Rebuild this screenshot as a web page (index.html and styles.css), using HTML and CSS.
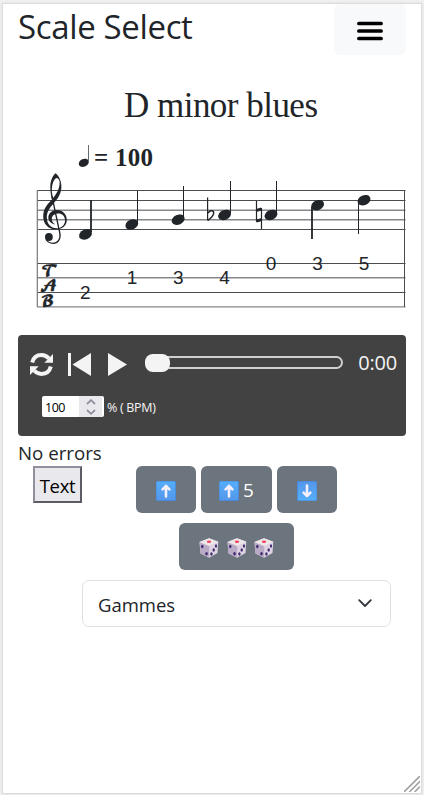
FILE: index.html
```html
<!DOCTYPE html>
<html lang="en">
<head>
<meta charset="utf-8">
<title>Scale Select</title>
<link rel="stylesheet" href="styles.css">
</head>
<body>
<svg width="0" height="0" class="defs">
  <defs>
    <linearGradient id="sky" x1="0" y1="0" x2="0" y2="1"><stop offset="0" stop-color="#55aefb"/><stop offset="1" stop-color="#5497ea"/></linearGradient>
    <symbol id="arrow" viewBox="0 0 20 20"><rect width="20" height="20" rx="1.5" fill="#4585d6"/><rect x=".5" y=".5" width="18.7" height="18.7" rx="1.3" fill="url(#sky)"/><path d="M10 4.9 6.6 8.4M10 4.9l3.4 3.5M10 5v10.4" fill="none" stroke="#f6effc" stroke-width="2.6" stroke-linecap="round" stroke-linejoin="round"/></symbol>
    <symbol id="die" viewBox="0 0 20 20"><path d="M10 .3 19.3 3.8 18.5 15 10.2 19.8 1.5 15.5.5 4z" fill="#ddd3e2"/><path d="M.5 4 10.2 8v11.8L1.5 15.5z" fill="#b9abc5"/><path d="M10 .3 19.3 3.8 10.2 8 .5 4z" fill="#eee7e8"/><ellipse cx="10" cy="3.7" rx="2.2" ry="1.2" fill="#ef4765"/><g fill="#432b70"><ellipse cx="3.3" cy="8.5" rx="1.2" ry="1.7"/><ellipse cx="7.5" cy="15.7" rx="1.3" ry="1.8"/><ellipse cx="17" cy="8" rx="1.1" ry="1.8"/><ellipse cx="14.7" cy="12" rx="1.2" ry="1.7"/><ellipse cx="12.4" cy="16" rx="1.2" ry="1.7"/></g></symbol>
    <ellipse id="head" rx="6.7" ry="4.9" transform="rotate(-24)"/>
  </defs>
</svg>
<div class="frame">
  <header class="top">
    <h1>Scale Select</h1>
    <button class="menu" aria-label="Menu">
      <svg width="26" height="20" viewBox="0 0 26 20"><path d="M1.9 2.5h22.2M1.9 10h22.2M1.9 17.5h22.2" stroke="#000" stroke-width="3.7" stroke-linecap="round"/></svg>
    </button>
  </header>

  <svg class="score" viewBox="18 75 388 260" width="388" height="260" fill="#212529">
    <text class="title" x="124" y="117.3" textLength="194">D minor blues</text>
    <g transform="translate(83.8 162.8) scale(.78)"><use href="#head"/></g>
    <path d="M88.5 145v17" stroke="#666a6d"/>
    <text class="tempo" x="94" y="166" textLength="59">= 100</text>
    <g fill="none" stroke="#4a4d50">
      <path d="M37 190.5H405.5M37 200.5H405.5M37 229.5H405.5M37 263.5H405.5M37 292.5H405.5"/>
      <path d="M37 210.3H405.5M37 219.7H405.5M37 277.8H405.5M37 306.9H405.5" stroke="#85878a" stroke-width="1.4"/>
      <path d="M37.3 190V307" stroke="#77797c" stroke-width="1.2"/>
      <path d="M404.5 190V307"/>
    </g>
    <path fill-rule="evenodd" d="M55.3 173.2C58.5 175 61.6 181 61.4 187 61.2 194 57.5 199 53.5 203.5 49.5 208 46.8 212 46.8 217.5 46.8 224 51 228.3 56.5 228.3 61.5 228.3 65 225 65 220.5 65 216 62 213.6 58.3 213.6 54.5 213.6 51.8 216 51.8 219 51.8 221.5 53 223 54.8 224L54.4 224.6C50.5 223.2 48.3 220.5 48.3 217.5 48.3 213.5 52 210 57 210 63 210 66.8 214.5 66.8 220 66.8 226 62 229.4 55.5 229.4 48 229.4 43.2 223.5 43.2 216.5 43.2 208.5 47.5 204 52 199.5 50.8 195 50.3 191 50.3 187 50.3 181 52.5 176 55.3 173.2ZM56.7 178C59 178.5 60 181 59.6 184 59 190 56 194.5 53 198 51.8 193 51.5 190 52.2 186 52.8 182 54.5 178.5 56.7 178Z"/>
    <path d="M51.9 196 59.8 233C61 239 58 243.3 53 243.3 50 243.3 47.5 241.8 46 239.5" fill="none" stroke="#212529" stroke-width="1.3"/>
    <circle cx="48.9" cy="237" r="3.9"/>
    <g class="tab"><text x="41" y="276">𝓣</text><text x="39.5" y="290.5">𝓐</text><text x="40.5" y="305.6">𝓑</text></g>
    <use href="#head" transform="translate(85.5 234.4)"/>
    <use href="#head" transform="translate(131.8 224.6)"/>
    <use href="#head" transform="translate(178.2 219.7)"/>
    <use href="#head" transform="translate(224.6 214.9)"/>
    <use href="#head" transform="translate(271 214.9)"/>
    <use href="#head" transform="translate(317.6 205.2)"/>
    <use href="#head" transform="translate(364 200.2)"/>
    <g stroke="#212529" fill="none">
      <path d="M91 200V232M312 207V239" stroke-width="1.8"/>
      <path d="M137.5 191V223M183.5 186V218M230.5 181V213M276.5 181V213M358.5 202V234"/>
      <path d="M207.6 197.5V220.5" stroke-width="1.2"/>
      <path d="M207.8 213C211 209.5 214.2 210.5 213.6 213.7 213 216.5 210.5 218.5 207.9 220.3" stroke-width="1.5"/>
      <path d="M256.5 201V222M261.5 208V229" stroke-width="1.2"/>
      <path d="M256.5 210.4 261.5 209M256.5 221 261.5 219.6" stroke-width="3"/>
    </g>
    <g class="fret"><text x="85.3" y="298.7">2</text><text x="132" y="284">1</text><text x="178.2" y="284">3</text><text x="224.5" y="284">4</text><text x="271" y="269.7">0</text><text x="317.5" y="269.7">3</text><text x="364" y="269.7">5</text></g>
  </svg>

  <section class="player">
    <div class="controls">
      <svg class="loop" width="23" height="23" viewBox="0 0 23 23"><g fill="none" stroke="#f4f4f4" stroke-width="4"><path d="M2.2 9.5C3.5 4.5 7 2.1 11.5 2.1c3.2 0 5.4 1.2 7.3 3.4"/><path d="M20.8 13.5C19.5 18.5 16 20.9 11.5 20.9c-3.2 0-5.4-1.2-7.3-3.4"/></g><path d="M23 1v8.7h-8.7zM0 22v-8.7h8.7z" fill="#f4f4f4"/></svg>
      <svg class="prev" width="23" height="23" viewBox="0 0 23 23" fill="#f4f4f4"><path d="M0 0h3v23H0zM23 0v23L4.5 11.5z"/></svg>
      <svg class="play" width="19" height="23" viewBox="0 0 19 23" fill="#f4f4f4"><path d="M0 0 19 11.5 0 23z"/></svg>
      <div class="track"><span class="thumb"></span></div>
      <span class="clock">0:00</span>
    </div>
    <div class="tempo-row">
      <div class="spin"><span class="num">100</span><span class="steps"><svg width="10" height="16" viewBox="0 0 10 16" fill="none" stroke="#8f8f9d" stroke-width="1.8"><path d="M1 5l4-3.8L9 5M1 11l4 3.8L9 11"/></svg></span></div>
      <span class="bpm">% ( BPM)</span>
    </div>
  </section>

  <div class="status">No errors</div>
  <div class="actions">
    <button class="text-btn">Text</button>
    <div class="buttons">
      <button class="btn"><svg width="20" height="20"><use href="#arrow"/></svg></button>
      <button class="btn wide"><svg width="20" height="20"><use href="#arrow"/></svg><span>5</span></button>
      <button class="btn"><svg class="down" width="20" height="20"><use href="#arrow"/></svg></button>
      <button class="btn dice"><svg width="20" height="20"><use href="#die"/></svg><svg width="20" height="20"><use href="#die"/></svg><svg width="20" height="20"><use href="#die"/></svg></button>
    </div>
  </div>
  <div class="select"><span>Gammes</span><svg width="14" height="9" viewBox="0 0 14 9"><path d="M1.2 1.2 7 7l5.8-5.8" fill="none" stroke="#343a40" stroke-width="1.9" stroke-linecap="round" stroke-linejoin="round"/></svg></div>
  <svg class="grip" width="16" height="16" viewBox="0 0 16 16"><path d="M0 16 16 0M5.3 16 16 5.3M10.6 16 16 10.6" stroke="#a2a2a4" stroke-width="1.6"/></svg>
</div>
</body>
</html>
```
FILE: styles.css
```css
* { box-sizing: border-box; }
body { margin: 0; height: 795px; padding: 3px 2px 1px; background: #f1f1f1; color: #212529; font-family: "Open Sans", sans-serif; overflow: hidden; }
svg { display: block; flex: none; }
button { font: inherit; padding: 0; }
.defs { position: absolute; }
.frame { position: relative; height: 791px; width: 420px; padding: 0 15px; background: #fff; border: 1px solid #dcdcdc; box-shadow: 0 0 3px #ddd; }
.top { display: flex; justify-content: space-between; height: 71px; }
h1 { margin: 0; font-size: 33px; font-weight: 400; line-height: 45px; letter-spacing: -.35px; white-space: nowrap; }
.menu { display: flex; align-items: center; justify-content: center; width: 72px; height: 51px; padding-top: 2px; border: 0; border-radius: 6px; background: #f8f9fa; }
.title { font: 35px "Liberation Serif", serif; }
.tempo { font: bold 25px "Liberation Serif", serif; }
.fret { font: 19px "Liberation Sans", sans-serif; text-anchor: middle; }
.tab { font: 15px "DejaVu Math TeX Gyre", "DejaVu Serif", serif; stroke: #212529; stroke-width: .4px; }
.player { height: 101px; padding: 18px 9px 0 12px; border-radius: 4px; background: #424242; color: #f4f4f4; }
.controls { display: flex; align-items: flex-start; height: 43px; }
.prev { margin-left: 15px; }
.play { margin-left: 17px; }
.track { width: 198px; height: 13px; margin: 3px 0 0 18px; border: 2px solid #cfcfcf; border-radius: 7px; display: flex; align-items: center; }
.thumb { width: 25px; height: 18px; margin-left: -2px; flex: none; border-radius: 8px; background: #f4f4f4; }
.clock { margin-left: auto; font-size: 20px; line-height: 19px; letter-spacing: -.2px; }
.tempo-row { display: flex; align-items: center; height: 21px; margin-left: 12px; font-size: 12.5px; }
.spin { display: flex; width: 62px; height: 21px; border-radius: 2px; overflow: hidden; background: #fff; color: #000; line-height: 23px; }
.num { width: 37px; padding-left: 3px; letter-spacing: -.5px; }
.steps { display: flex; align-items: center; justify-content: center; width: 23px; background: #e9e9ed; }
.bpm { margin-left: 3px; padding-top: 2px; letter-spacing: -.3px; white-space: nowrap; }
.status { height: 30px; font-size: 18.7px; line-height: 34px; letter-spacing: 0; }
.actions { display: flex; align-items: flex-start; padding-left: 15px; }
.text-btn { width: 49px; height: 37px; border: 2px solid; border-color: #8f8f9d #5c5b66 #5c5b66 #8f8f9d; background: #e9e9ed; color: #000; font-size: 18.5px; line-height: 35px; letter-spacing: -.3px; }
.buttons { display: flex; flex-wrap: wrap; justify-content: center; width: 213px; margin-left: 48px; gap: 10px 5px; }
.btn { display: flex; align-items: center; justify-content: center; width: 60px; height: 47px; padding-top: 3px; border: 0; border-radius: 6px; background: #6c757d; color: #fff; font-size: 19px; }
.btn span { margin-top: -2px; }
.wide { width: 71px; gap: 4px; }
.dice { width: 115px; gap: 7.5px; }
.down { transform: rotate(180deg); }
.select { display: flex; align-items: center; justify-content: space-between; width: 309px; height: 47px; margin: 10px 0 0 64px; padding: 0 18px 0 15px; border: 1px solid #dee2e6; border-radius: 7px; font-size: 18.5px; }
.select span { padding-top: 2px; }
.grip { position: absolute; right: 1px; bottom: 1px; }
```
